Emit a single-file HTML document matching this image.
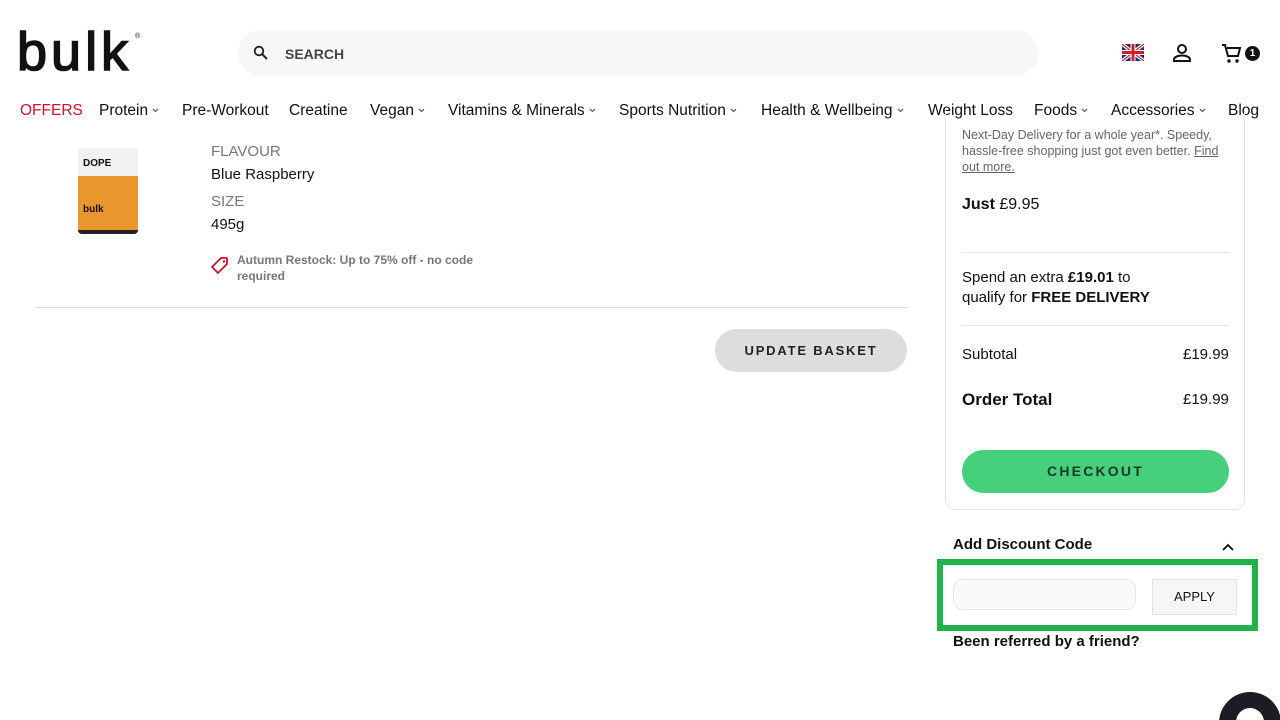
<!DOCTYPE html>
<html><head><meta charset="utf-8"><style>
*{margin:0;padding:0;box-sizing:border-box}
html,body{width:1280px;height:720px;overflow:hidden}
body{background:#fff;font-family:"Liberation Sans",sans-serif;color:#111;position:relative}
.a{position:absolute;white-space:nowrap}
.nav span{position:absolute;top:102px;font-size:15.5px;color:#111}
.nav svg{margin-left:4px;vertical-align:2px}
</style></head><body>
<div class="a" style="left:17px;top:22px;font-size:54px;letter-spacing:4px;line-height:60px;-webkit-text-stroke:1.6px #111">bulk</div>
<div class="a" style="left:135px;top:33px;font-size:7px">®</div>
<div class="a" style="left:238px;top:30px;width:800px;height:46px;border-radius:23px;background:#f7f7f7"></div>
<svg class="a" style="left:253px;top:45px" width="16" height="16" viewBox="0 0 16 16"><circle cx="6" cy="6" r="4.3" fill="none" stroke="#222" stroke-width="1.8"/><path d="M9.2 9.2L14 14" stroke="#222" stroke-width="2"/></svg>
<div class="a" style="left:285px;top:46px;font-size:14px;color:#444;font-weight:bold">SEARCH</div>
<svg class="a" style="left:1122px;top:44px" width="22" height="17" viewBox="0 0 22 17"><rect width="22" height="17" rx="3" fill="#1a2d6b"/><path d="M0 0L22 17M22 0L0 17" stroke="#fff" stroke-width="3.5"/><path d="M0 0L22 17M22 0L0 17" stroke="#d01c2b" stroke-width="1.2"/><path d="M11 0V17M0 8.5H22" stroke="#fff" stroke-width="5"/><path d="M11 0V17M0 8.5H22" stroke="#d01c2b" stroke-width="3"/></svg>
<svg class="a" style="left:1172px;top:43px" width="20" height="20" viewBox="0 0 20 20"><circle cx="10" cy="6" r="4" fill="none" stroke="#111" stroke-width="2"/><path d="M2 18v-1.5c0-2.5 4-4 8-4s8 1.5 8 4V18z" fill="none" stroke="#111" stroke-width="2"/></svg>
<svg class="a" style="left:1221px;top:43px" width="22" height="22" viewBox="0 0 22 22"><path d="M1 2h3l3 11h10l2-8H6" fill="none" stroke="#111" stroke-width="2"/><circle cx="8" cy="18" r="1.7" fill="#111"/><circle cx="16" cy="18" r="1.7" fill="#111"/></svg>
<div class="a" style="left:1245px;top:46px;width:15px;height:15px;border-radius:50%;background:#111;color:#fff;font-size:10px;font-weight:bold;text-align:center;line-height:15px">1</div>
<div class="nav">
<span style="left:20px;color:#d0112b">OFFERS</span>
<span style="left:99px">Protein<svg width="7" height="5" viewBox="0 0 7 5"><path d="M1 1l2.5 2.5L6 1" fill="none" stroke="#555" stroke-width="1.2"/></svg></span>
<span style="left:182px">Pre-Workout</span>
<span style="left:289px">Creatine</span>
<span style="left:370px">Vegan<svg width="7" height="5" viewBox="0 0 7 5"><path d="M1 1l2.5 2.5L6 1" fill="none" stroke="#555" stroke-width="1.2"/></svg></span>
<span style="left:448px">Vitamins &amp; Minerals<svg width="7" height="5" viewBox="0 0 7 5"><path d="M1 1l2.5 2.5L6 1" fill="none" stroke="#555" stroke-width="1.2"/></svg></span>
<span style="left:619px">Sports Nutrition<svg width="7" height="5" viewBox="0 0 7 5"><path d="M1 1l2.5 2.5L6 1" fill="none" stroke="#555" stroke-width="1.2"/></svg></span>
<span style="left:761px">Health &amp; Wellbeing<svg width="7" height="5" viewBox="0 0 7 5"><path d="M1 1l2.5 2.5L6 1" fill="none" stroke="#555" stroke-width="1.2"/></svg></span>
<span style="left:928px">Weight Loss</span>
<span style="left:1034px">Foods<svg width="7" height="5" viewBox="0 0 7 5"><path d="M1 1l2.5 2.5L6 1" fill="none" stroke="#555" stroke-width="1.2"/></svg></span>
<span style="left:1111px">Accessories<svg width="7" height="5" viewBox="0 0 7 5"><path d="M1 1l2.5 2.5L6 1" fill="none" stroke="#555" stroke-width="1.2"/></svg></span>
<span style="left:1228px">Blog</span>
</div>
<!-- product -->
<div class="a" style="left:78px;top:148px;width:60px;height:86px;border-radius:4px;background:#e8962e;overflow:hidden">
<div style="height:28px;background:#f1f1f1"></div>
<div style="position:absolute;left:5px;top:10px;font-size:10px;font-weight:bold">DOPE</div>
<div style="position:absolute;left:5px;top:56px;font-size:10px;font-weight:bold">bulk</div>
<div style="position:absolute;left:0;bottom:0;width:60px;height:4px;background:#222"></div>
</div>
<div class="a" style="left:211px;top:143px;font-size:15px;color:#777">FLAVOUR</div>
<div class="a" style="left:211px;top:166px;font-size:15px">Blue Raspberry</div>
<div class="a" style="left:211px;top:193px;font-size:15px;color:#777">SIZE</div>
<div class="a" style="left:211px;top:216px;font-size:15px">495g</div>
<svg class="a" style="left:210px;top:256px" width="20" height="20" viewBox="0 0 20 20"><path d="M2 11L11 2h6v6l-9 9z" fill="none" stroke="#d0112b" stroke-width="1.8" stroke-linejoin="round"/><circle cx="14" cy="5.5" r="1.2" fill="#d0112b"/></svg>
<div class="a" style="left:237px;top:252px;font-size:12px;color:#777;font-weight:bold;line-height:16px">Autumn Restock: Up to 75% off - no code<br>required</div>
<div class="a" style="left:35px;top:307px;width:872px;height:1px;background:#ddd"></div>
<div class="a" style="left:715px;top:329px;width:192px;height:43px;border-radius:22px;background:#ddd;font-size:13px;font-weight:bold;letter-spacing:1.8px;text-align:center;line-height:43px;color:#222">UPDATE BASKET</div>
<!-- summary -->
<div class="a" style="left:945px;top:110px;width:300px;height:400px;border:1px solid #e6e6e6;border-top:none;border-radius:0 0 10px 10px"></div>
<div class="a" style="left:962px;top:127px;font-size:12.5px;color:#666;line-height:16px">Next-Day Delivery for a whole year*. Speedy,<br>hassle-free shopping just got even better. <u>Find</u><br><u>out more.</u></div>
<div class="a" style="left:962px;top:196px;font-size:16px"><b>Just</b> £9.95</div>
<div class="a" style="left:962px;top:252px;width:267px;height:1px;background:#e3e3e3"></div>
<div class="a" style="left:962px;top:268px;font-size:15px;line-height:20px">Spend an extra <b>£19.01</b> to<br>qualify for <b>FREE DELIVERY</b></div>
<div class="a" style="left:962px;top:325px;width:267px;height:1px;background:#e3e3e3"></div>
<div class="a" style="left:962px;top:346px;font-size:15px">Subtotal</div>
<div class="a" style="left:1183px;top:346px;font-size:15px">£19.99</div>
<div class="a" style="left:962px;top:390px;font-size:17px;font-weight:bold">Order Total</div>
<div class="a" style="left:1183px;top:391px;font-size:15px">£19.99</div>
<div class="a" style="left:962px;top:450px;width:267px;height:43px;border-radius:22px;background:#46d07c;font-size:14px;font-weight:bold;letter-spacing:2.2px;text-align:center;line-height:43px;color:#1a3a28">CHECKOUT</div>
<div class="a" style="left:953px;top:536px;font-size:15px;font-weight:bold">Add Discount Code</div>
<svg class="a" style="left:1221px;top:542px" width="14" height="10" viewBox="0 0 14 10"><path d="M2 8L7 3l5 5" fill="none" stroke="#111" stroke-width="1.8"/></svg>
<div class="a" style="left:937px;top:559px;width:321px;height:72px;border:6px solid #22b24c"></div>
<div class="a" style="left:953px;top:579px;width:183px;height:31px;border:1px solid #e6e6e6;border-radius:10px;background:#fafafa"></div>
<div class="a" style="left:1152px;top:579px;width:85px;height:36px;border:1px solid #e2e2e2;background:#f6f6f6;font-size:13px;text-align:center;line-height:34px;color:#111">APPLY</div>
<div class="a" style="left:953px;top:633px;font-size:15px;font-weight:bold">Been referred by a friend?</div>
<div class="a" style="left:1219px;top:692px;width:62px;height:62px;border-radius:50%;background:#1c1c24"></div>
<div class="a" style="left:1236px;top:708px;width:28px;height:28px;border-radius:50%;background:#fff"></div>
</body></html>
